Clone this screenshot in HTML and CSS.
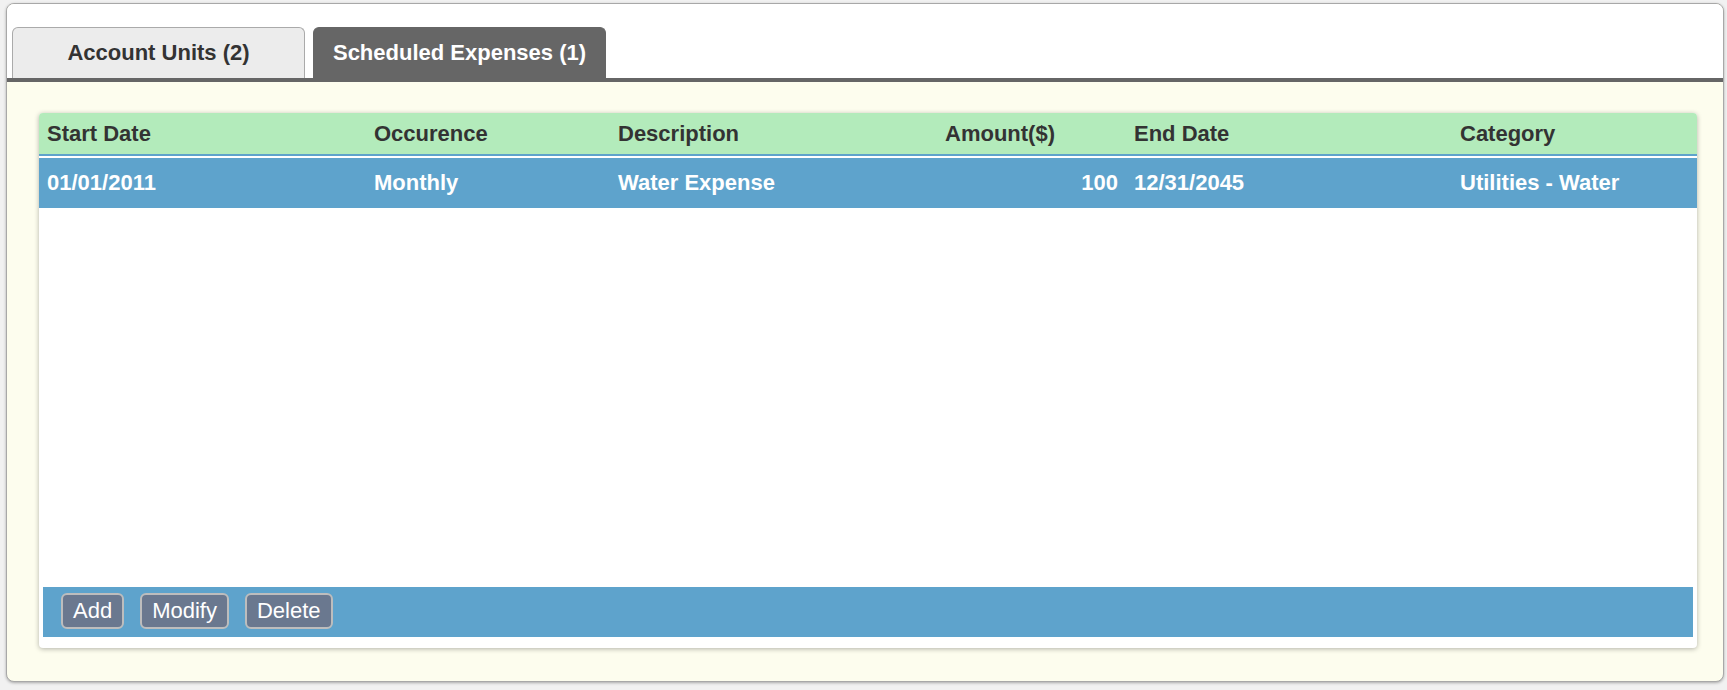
FILE: index.html
```html
<!doctype html>
<html>
  <head>
    <meta charset="utf-8" />
    <title>Scheduled Expenses</title>
    <link rel="stylesheet" href="styles.css">
  </head>
  <body>
    <div class="panel">
        <div class="tab-bar">
            <div class="tab">Account Units (2)</div>
            <div class="tab active">Scheduled Expenses (1)</div>
        </div>

        <div class="tab-content">
            <div class="grid-panel">
                <div class="grid-row grid-header">
                    <span>Start Date</span>
                    <span>Occurence</span>
                    <span>Description</span>
                    <span>Amount($)</span>
                    <span>End Date</span>
                    <span>Category</span>
                </div>
                <div class="grid-body">
                    <div class="grid-row grid-item selected">
                        <span>01/01/2011</span>
                        <span>Monthly</span>
                        <span>Water Expense</span>
                        <span class="num">100</span>
                        <span>12/31/2045</span>
                        <span>Utilities - Water</span>
                    </div>
                </div>
                <div class="toolbar">
                    <button class="btn">Add</button>
                    <button class="btn">Modify</button>
                    <button class="btn">Delete</button>
                </div>
            </div>
        </div>
    </div>
  </body>
</html>
```

FILE: styles.css
```css
body {
    margin: 0;
    padding: 3px 3px 8px 6px;
    background: #f1f1f1;
    font-family: "Liberation Sans", Arial, sans-serif;
    font-size: 22px;
}
.panel {
    border: 1px solid #a8a8a8;
    border-radius: 8px;
    background: #fdfdee;
    box-shadow: 0 1px 3px rgba(0,0,0,0.3);
    overflow: hidden;
}
.tab-bar {
    display: flex;
    gap: 8px;
    padding: 23px 5px 0;
    background: #fff;
    border-bottom: 4px solid #666;
}
.tab {
    width: 293px;
    height: 51px;
    box-sizing: border-box;
    display: flex;
    align-items: center;
    justify-content: center;
    background: #ececec;
    border: 1px solid #aaa;
    border-bottom: none;
    border-radius: 6px 6px 0 0;
    color: #333;
    font-weight: bold;
}
.tab.active {
    background: #666;
    border-color: #666;
    color: #fff;
}
.tab-content {
    padding: 31px 26px 33px 32px;
}
.grid-panel {
    background: #fff;
    border-radius: 4px;
    box-shadow: 0 1px 5px rgba(0,0,0,0.3);
    padding-bottom: 11px;
    overflow: hidden;
}
.grid-row {
    display: grid;
    grid-template-columns: 327fr 244fr 327fr 189fr 326fr 245fr;
    align-items: center;
    font-weight: bold;
}
.grid-row span {
    padding: 0 8px;
    white-space: nowrap;
}
.grid-header {
    height: 41px;
    background: #b3ebbb;
    color: #333;
    border-bottom: 2px solid #5ea3cc;
    margin-bottom: 2px;
}
.grid-body {
    height: 429px;
}
.grid-item {
    height: 50px;
    color: #fff;
}
.grid-item.selected {
    background: #5ea3cc;
}
.grid-item .num {
    text-align: right;
}
.toolbar {
    display: flex;
    align-items: flex-start;
    gap: 16px;
    height: 50px;
    box-sizing: border-box;
    margin: 0 4px;
    padding: 6px 18px;
    background: #5ea3cc;
}
.btn {
    height: 36px;
    padding: 0 10px;
    background: #6a788f;
    border: 2px solid #bdbdbd;
    border-radius: 6px;
    color: #fff;
    font-family: inherit;
    font-size: 22px;
    cursor: pointer;
}
```
